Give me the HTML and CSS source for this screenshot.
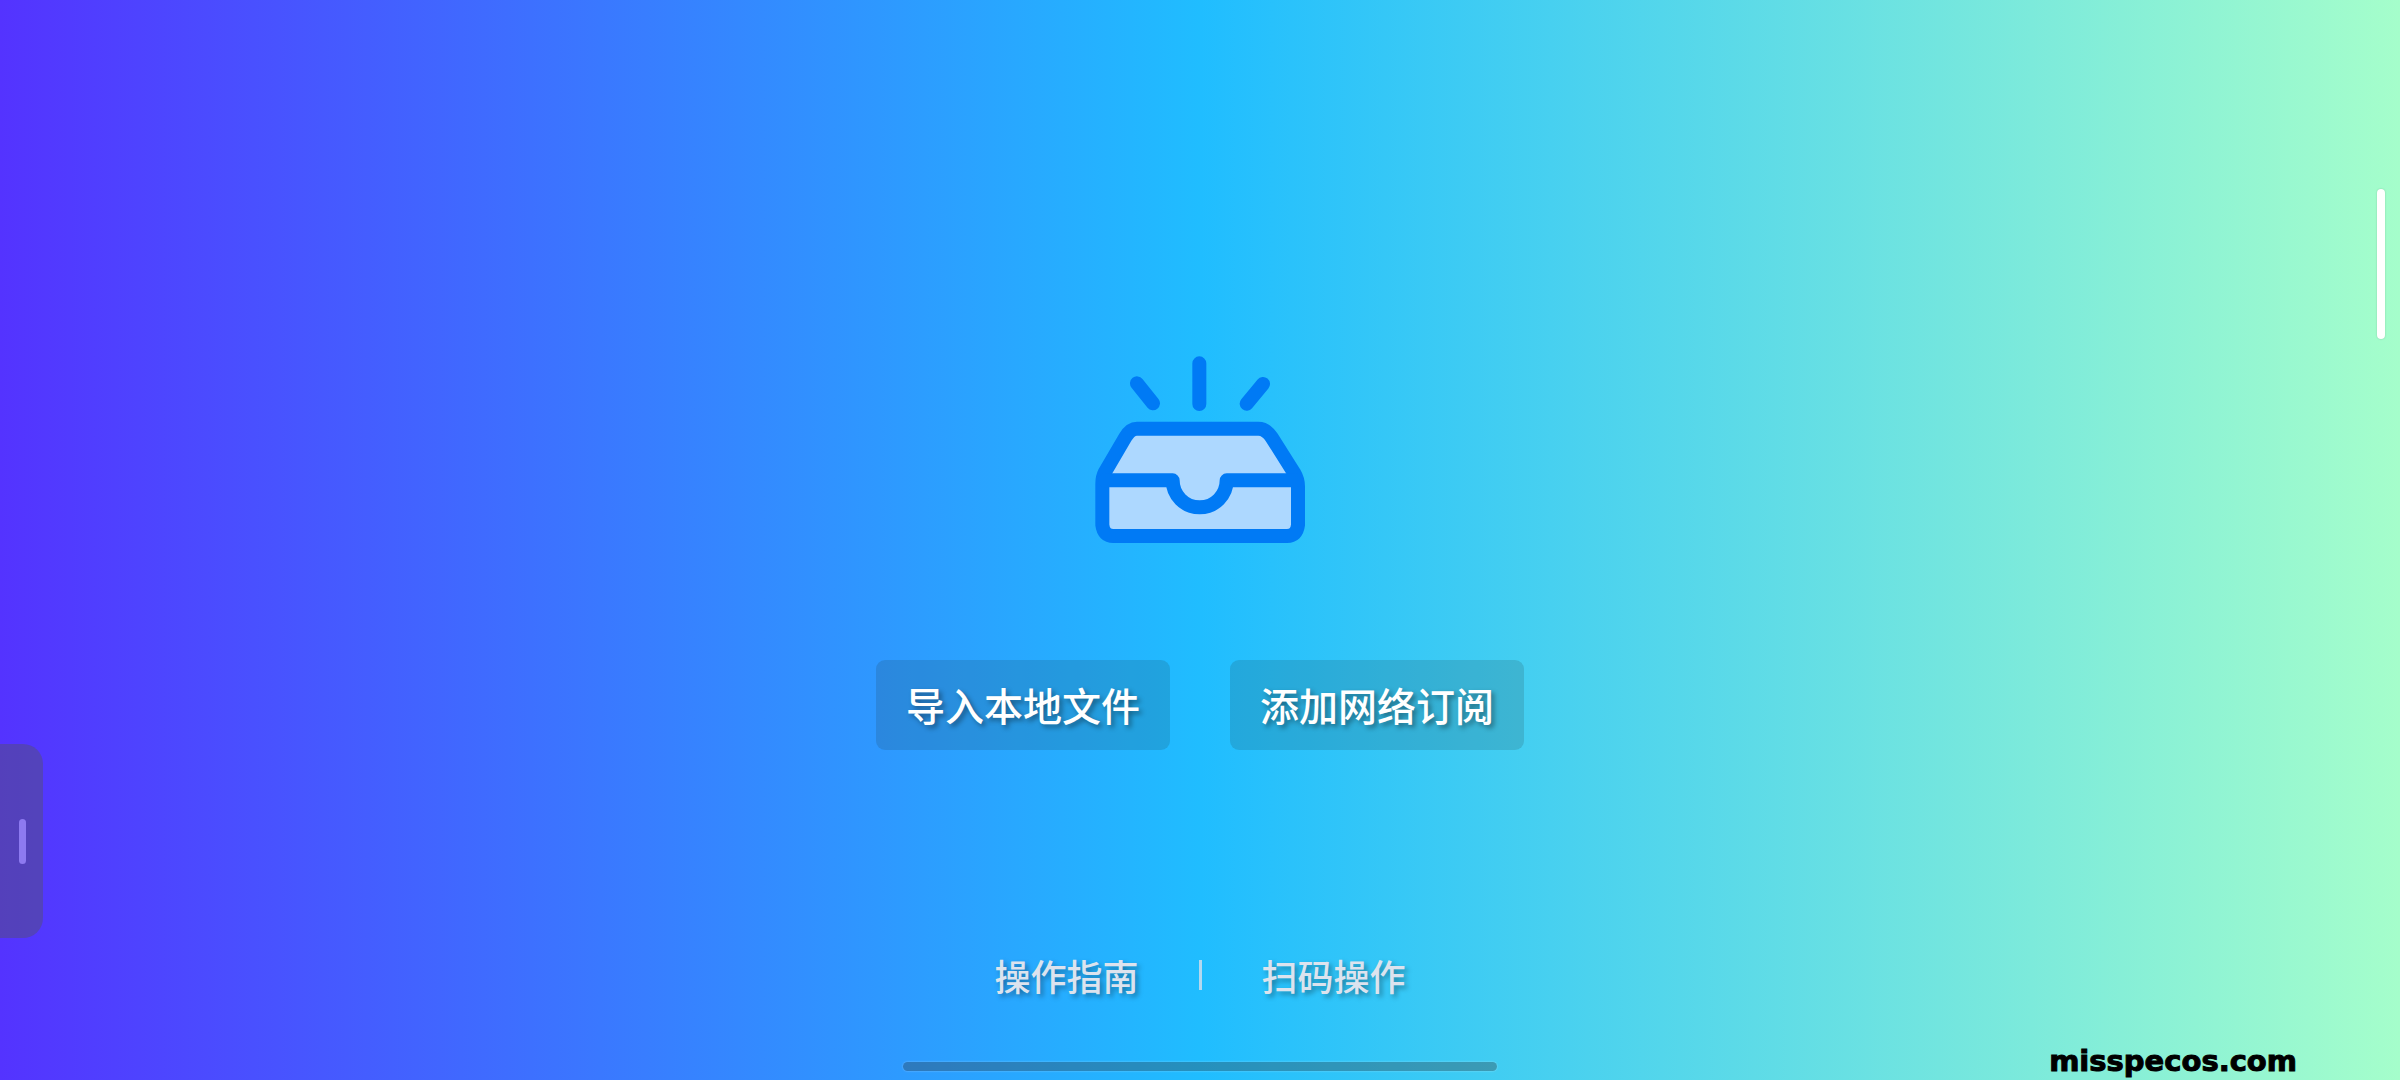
FILE: index.html
```html
<!DOCTYPE html>
<html lang="zh-CN">
<head>
  <meta charset="UTF-8">
  <meta name="viewport" content="width=device-width, initial-scale=1.0">
  <title>导入</title>
  <link rel="stylesheet" href="styles.css">
</head>
<body>
  <main class="content">
    <svg class="inbox" viewBox="0 0 780 660" aria-hidden="true">
      <path class="inbox-fill" d="M201 266H565Q588 266 605 292L672 398Q684 418 684 440V555Q680 588 651 588H130Q101 588 97 555V430Q97 412 105 396L166 292Q181 266 201 266Z"/>
      <path class="inbox-line" d="M201 266H565Q588 266 605 292L672 398Q684 418 684 440V555Q680 588 651 588H130Q101 588 97 555V430Q97 412 105 396L166 292Q181 266 201 266Z"/>
      <path class="inbox-line" d="M105 421H308C308 465 343 502 389 502S470 465 470 421H676"/>
      <path class="inbox-ray" d="M388 70V192M201 130L249 190M579 132L530 191"/>
    </svg>
    <div class="actions">
      <button class="btn" type="button">导入本地文件</button>
      <button class="btn" type="button">添加网络订阅</button>
    </div>
  </main>

  <footer class="links">
    <a href="#guide">操作指南</a>
    <span class="divider"></span>
    <a href="#scan">扫码操作</a>
  </footer>

  <div class="drawer"><span class="drawer-grip"></span></div>
  <div class="scroll-thumb"></div>
  <div class="home-bar"></div>
  <div class="watermark">misspecos.com</div>
</body>
</html>
```

FILE: styles.css
```css
* {
  box-sizing: border-box;
}
body {
  margin: 0;
  min-height: 100vh;
  display: flex;
  flex-direction: column;
  position: relative;
  overflow: hidden;
  background: linear-gradient(to right, #5433ff, #20bdff, #a5fecb);
  font-family: "Noto Sans CJK SC", sans-serif;
  font-weight: 500;
}
.content {
  flex: 1;
  display: flex;
  flex-direction: column;
  align-items: center;
  justify-content: flex-end;
  gap: 100px;
}
.inbox {
  width: 260px;
  height: 220px;
  fill: none;
  stroke-linecap: round;
  stroke-linejoin: round;
}
.inbox-fill {
  fill: #add8ff;
}
.inbox-line {
  stroke: #007af5;
  stroke-width: 42;
}
.inbox-ray {
  stroke: #007af5;
  stroke-width: 42;
}
.actions {
  display: flex;
  gap: 60px;
}
.btn {
  height: 90px;
  padding: 0 30px 2px;
  border: 0;
  border-radius: 9px;
  background: rgba(30, 50, 50, 0.16);
  color: #fff;
  font: inherit;
  font-size: 39px;
  line-height: 48px;
  text-shadow: 3px 3px 5px rgba(0, 0, 0, 0.4);
  cursor: pointer;
}
.links {
  display: flex;
  justify-content: center;
  align-items: center;
  gap: 60px;
  padding: 200px 0 80px;
  font-size: 36px;
  line-height: 50px;
}
.links a {
  color: #dce3ee;
  text-decoration: none;
  text-shadow: 3px 3px 5px rgba(0, 0, 0, 0.35);
}
.divider {
  width: 3px;
  height: 30px;
  background: #b4d8ef;
}

/* overlays on the screen edges */
.drawer {
  position: absolute;
  left: 0;
  top: 744px;
  width: 43px;
  height: 194px;
  padding-right: 17px;
  border-radius: 0 20px 20px 0;
  background: rgba(85, 85, 85, 0.4);
  display: flex;
  align-items: center;
  justify-content: flex-end;
}
.drawer-grip {
  width: 7px;
  height: 45px;
  border-radius: 4px;
  background: #8d7af0;
}
.scroll-thumb {
  position: absolute;
  right: 15px;
  top: 189px;
  width: 8px;
  height: 150px;
  border-radius: 4px;
  background: #fff;
  box-shadow: 0 0 2px rgba(0, 0, 0, 0.2);
}
.home-bar {
  position: absolute;
  left: 50%;
  bottom: 9px;
  width: 594px;
  height: 9px;
  margin-left: -297px;
  border-radius: 5px;
  background: rgba(51, 51, 51, 0.32);
  box-shadow: 0 0 2px rgba(255, 255, 255, 0.4);
}
.watermark {
  position: absolute;
  right: 103px;
  bottom: 3px;
  color: #000;
  font: bold 29px/32px "DejaVu Sans", sans-serif;
  -webkit-text-stroke: 1px #000;
}
```
